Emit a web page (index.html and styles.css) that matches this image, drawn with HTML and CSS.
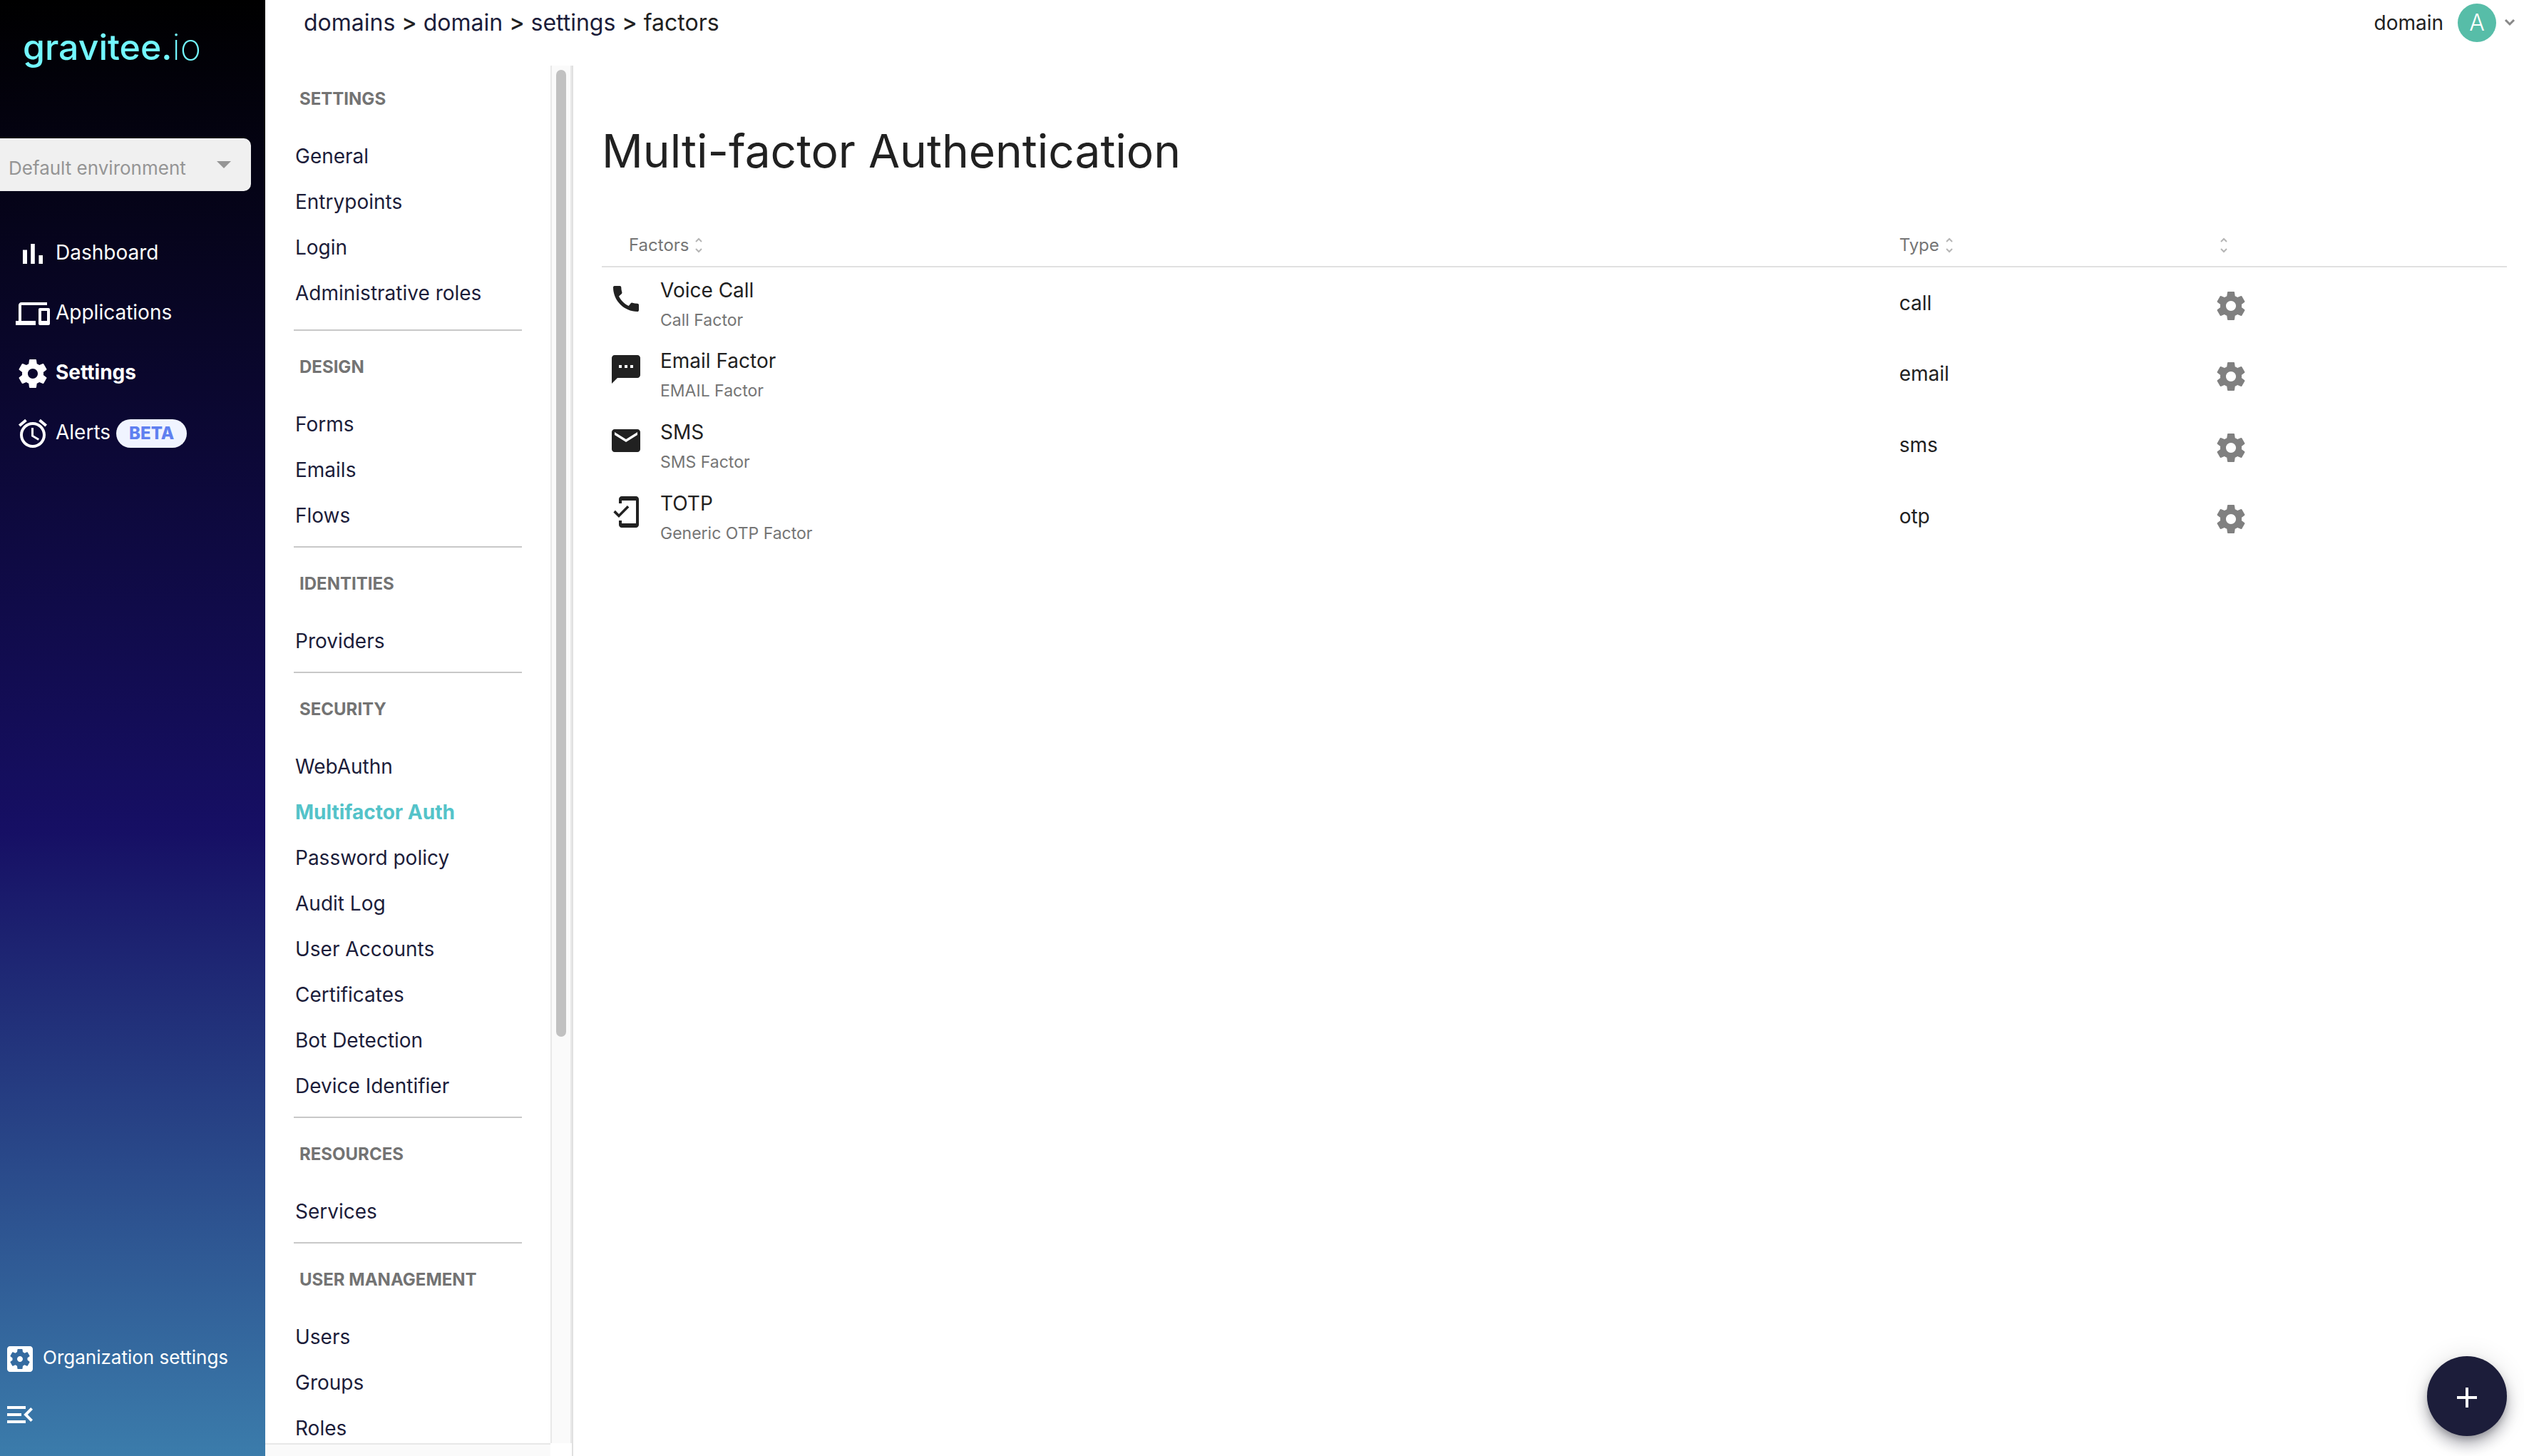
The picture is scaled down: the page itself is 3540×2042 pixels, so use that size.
FILE: index.html
```html
<!DOCTYPE html>
<html lang="en">
<head>
<meta charset="utf-8">
<title>Multi-factor Authentication</title>
<link rel="stylesheet" href="styles.css">
</head>
<body>
<svg class="defs" aria-hidden="true">
  <symbol id="gear" viewBox="0 0 24 24"><path d="M19.43 12.98c.04-.32.07-.64.07-.98s-.03-.66-.07-.98l2.11-1.65c.19-.15.24-.42.12-.64l-2-3.46c-.12-.22-.39-.3-.61-.22l-2.49 1c-.52-.4-1.08-.73-1.69-.98l-.38-2.65C14.46 2.18 14.25 2 14 2h-4c-.25 0-.46.18-.49.42l-.38 2.65c-.61.25-1.17.59-1.69.98l-2.49-1c-.23-.09-.49 0-.61.22l-2 3.46c-.13.22-.07.49.12.64l2.11 1.65c-.04.32-.07.65-.07.98s.03.66.07.98l-2.11 1.65c-.19.15-.24.42-.12.64l2 3.46c.12.22.39.3.61.22l2.49-1c.52.4 1.08.73 1.69.98l.38 2.65c.03.24.24.42.49.42h4c.25 0 .46-.18.49-.42l.38-2.65c.61-.25 1.17-.59 1.69-.98l2.49 1c.23.09.49 0 .61-.22l2-3.46c.12-.22.07-.49-.12-.64l-2.11-1.65zM12 15.5c-1.93 0-3.5-1.57-3.5-3.5s1.57-3.5 3.5-3.5 3.5 1.57 3.5 3.5-1.57 3.5-3.5 3.5z"/></symbol>
  <symbol id="sort" viewBox="0 0 12 24"><path d="M2 7l4-4 4 4M2 17l4 4 4-4" fill="none" stroke="currentColor" stroke-width="2"/></symbol>
</svg>
<div class="app">
  <aside class="sidebar">
    <a class="logo" href="#">gravitee.<span class="logo-suffix">io</span></a>
    <div class="env">
      <select class="env-select" aria-label="Environment" disabled><option>Default environment</option></select>
    </div>
    <nav class="main-nav" aria-label="Main">
      <a class="main-link" href="#"><svg class="icon" viewBox="0 0 24 24"><path d="M5 9.200h3V19H5zM10.600 5h2.800v14h-2.800zM16.200 13H19v6h-2.800z"/></svg><span class="label">Dashboard</span></a>
      <a class="main-link" href="#"><svg class="icon" viewBox="0 0 24 24"><path d="M4 6h18V4H4c-1.100 0-2 .9-2 2v11H0v3h14v-3H4V6zm19 2h-6c-.55 0-1 .45-1 1v10c0 .55.45 1 1 1h6c.55 0 1-.45 1-1V9c0-.55-.45-1-1-1zm-1 9h-4v-7h4v7z"/></svg><span class="label">Applications</span></a>
      <a class="main-link current" href="#"><svg class="icon"><use href="#gear"/></svg><span class="label">Settings</span></a>
      <a class="main-link" href="#"><svg class="icon" viewBox="0 0 24 24"><path d="M22 5.720l-4.600-3.860-1.290 1.530 4.600 3.860L22 5.720zM7.880 3.390L6.600 1.860 2 5.710l1.290 1.530 4.590-3.850zM12.500 8H11v6l4.750 2.850.75-1.230-4-2.370V8zM12 4c-4.970 0-9 4.030-9 9s4.020 9 9 9c4.970 0 9-4.030 9-9s-4.030-9-9-9zm0 16c-3.870 0-7-3.130-7-7s3.130-7 7-7 7 3.130 7 7-3.130 7-7 7z"/></svg><span class="label">Alerts</span><span class="badge">BETA</span></a>
    </nav>
    <div class="sidebar-foot">
      <a class="foot-link" href="#"><svg class="icon" viewBox="0 0 24 24"><path d="M12 10c-1.100 0-2 .9-2 2s.9 2 2 2 2-.9 2-2-.9-2-2-2zm7-7H5c-1.110 0-2 .9-2 2v14c0 1.100.89 2 2 2h14c1.110 0 2-.9 2-2V5c0-1.100-.89-2-2-2zm-1.750 9c0 .23-.02.46-.05.68l1.480 1.160c.13.11.17.3.08.45l-1.400 2.420c-.09.15-.27.21-.43.15l-1.740-.7c-.36.28-.76.51-1.180.69l-.26 1.850c-.03.17-.18.3-.35.3h-2.800c-.17 0-.32-.13-.35-.29l-.26-1.850c-.43-.18-.82-.41-1.180-.69l-1.740.7c-.16.06-.34 0-.43-.15l-1.400-2.420c-.09-.15-.05-.34.08-.45l1.480-1.160c-.03-.23-.05-.46-.05-.69 0-.23.02-.46.05-.68l-1.480-1.160c-.13-.11-.17-.3-.08-.45l1.400-2.420c.09-.15.27-.21.43-.15l1.740.7c.36-.28.76-.51 1.180-.69l.26-1.850c.03-.17.18-.3.35-.3h2.800c.17 0 .32.13.35.29l.26 1.850c.43.18.82.41 1.180.69l1.740-.7c.16-.06.34 0 .43.15l1.400 2.420c.09.15.05.34-.08.45l-1.480 1.160c.03.23.05.46.05.69z"/></svg><span class="label">Organization settings</span></a>
      <button class="collapse" type="button" aria-label="Collapse menu"><svg class="icon" viewBox="0 0 24 24"><path d="M3 18h13v-2H3v2zm0-5h10v-2H3v2zm0-7v2h13V6H3zm18 9.590L17.420 12 21 8.410 19.590 7l-5 5 5 5L21 15.590z"/></svg></button>
    </div>
  </aside>

  <div class="workspace">
    <header class="topbar">
      <nav class="crumbs" aria-label="Breadcrumb">
        <a href="#">domains</a> <b>&gt;</b> <a href="#">domain</a> <b>&gt;</b> <a href="#">settings</a> <b>&gt;</b> <span>factors</span>
      </nav>
      <button class="account" type="button">
        <span>domain</span>
        <span class="avatar">A</span>
        <svg class="chevron" viewBox="0 0 16 10"><path d="M2 1l6 6 6-6" fill="none" stroke="currentColor" stroke-width="3"/></svg>
      </button>
    </header>

    <div class="columns">
      <div class="submenu">
        <nav class="submenu-list" aria-label="Settings">
          <section class="group group-lead">
            <h2>Settings</h2>
            <a href="#">General</a><a href="#">Entrypoints</a><a href="#">Login</a><a href="#">Administrative roles</a>
          </section>
          <section class="group">
            <h2>Design</h2>
            <a href="#">Forms</a><a href="#">Emails</a><a href="#">Flows</a>
          </section>
          <section class="group">
            <h2>Identities</h2>
            <a href="#">Providers</a>
          </section>
          <section class="group">
            <h2>Security</h2>
            <a href="#">WebAuthn</a><a class="active" href="#">Multifactor Auth</a><a href="#">Password policy</a><a href="#">Audit Log</a><a href="#">User Accounts</a><a href="#">Certificates</a><a href="#">Bot Detection</a><a href="#">Device Identifier</a>
          </section>
          <section class="group">
            <h2>Resources</h2>
            <a href="#">Services</a>
          </section>
          <section class="group">
            <h2>User management</h2>
            <a href="#">Users</a><a href="#">Groups</a><a href="#">Roles</a>
          </section>
        </nav>
        <div class="track-y" aria-hidden="true"><div class="thumb"></div></div>
        <div class="track-x" aria-hidden="true"></div>
      </div>

      <main class="content">
        <h1>Multi-factor Authentication</h1>
        <table class="factors">
          <colgroup><col><col class="col-type"><col class="col-action"></colgroup>
          <thead>
            <tr>
              <th class="first" scope="col">Factors<svg class="sort"><use href="#sort"/></svg></th>
              <th scope="col">Type<svg class="sort"><use href="#sort"/></svg></th>
              <th scope="col" aria-label="Actions"><svg class="sort"><use href="#sort"/></svg></th>
            </tr>
          </thead>
          <tbody>
            <tr>
              <td><div class="factor"><svg class="icon" viewBox="0 0 24 24"><path d="M20.010 15.380c-1.230 0-2.420-.2-3.530-.56-.35-.12-.74-.03-1.010.24l-1.570 1.970c-2.830-1.350-5.480-3.900-6.890-6.830l1.950-1.660c.27-.28.35-.67.24-1.020-.37-1.110-.56-2.300-.56-3.530 0-.54-.45-.99-.99-.99H4.190C3.650 3 3 3.240 3 3.990 3 13.280 10.730 21 20.010 21c.71 0 .99-.63.99-1.180v-3.450c0-.54-.45-.99-.99-.99z"/></svg><div><div class="name">Voice Call</div><div class="kind">Call Factor</div></div></div></td>
              <td>call</td>
              <td><button class="gear-button" type="button" aria-label="Configure Voice Call"><svg class="icon"><use href="#gear"/></svg></button></td>
            </tr>
            <tr>
              <td><div class="factor"><svg class="icon" viewBox="0 0 24 24"><path d="M20 2H4c-1.100 0-1.990.9-1.990 2L2 22l4-4h14c1.100 0 2-.9 2-2V4c0-1.100-.9-2-2-2zM9 11H7V9h2v2zm4 0h-2V9h2v2zm4 0h-2V9h2v2z"/></svg><div><div class="name">Email Factor</div><div class="kind">EMAIL Factor</div></div></div></td>
              <td>email</td>
              <td><button class="gear-button" type="button" aria-label="Configure Email Factor"><svg class="icon"><use href="#gear"/></svg></button></td>
            </tr>
            <tr>
              <td><div class="factor"><svg class="icon" viewBox="0 0 24 24"><path d="M20 4H4c-1.100 0-1.990.9-1.990 2L2 18c0 1.100.9 2 2 2h16c1.100 0 2-.9 2-2V6c0-1.100-.9-2-2-2zm0 4l-8 5-8-5V6l8 5 8-5v2z"/></svg><div><div class="name">SMS</div><div class="kind">SMS Factor</div></div></div></td>
              <td>sms</td>
              <td><button class="gear-button" type="button" aria-label="Configure SMS"><svg class="icon"><use href="#gear"/></svg></button></td>
            </tr>
            <tr>
              <td><div class="factor"><svg class="icon" viewBox="0 0 24 24"><path d="M19 1H9c-1.100 0-2 .9-2 2v3h2V4h10v16H9v-2H7v3c0 1.100.9 2 2 2h10c1.100 0 2-.9 2-2V3c0-1.100-.9-2-2-2zM7.010 13.470l-2.550-2.550-1.270 1.270L7 16l7.190-7.190-1.270-1.270z"/></svg><div><div class="name">TOTP</div><div class="kind">Generic OTP Factor</div></div></div></td>
              <td>otp</td>
              <td><button class="gear-button" type="button" aria-label="Configure TOTP"><svg class="icon"><use href="#gear"/></svg></button></td>
            </tr>
          </tbody>
        </table>
      </main>
    </div>
  </div>
</div>
<button class="fab" type="button" aria-label="Add factor"><svg class="icon" viewBox="0 0 24 24"><path d="M19 13h-6v6h-2v-6H5v-2h6V5h2v6h6v2z"/></svg></button>
</body>
</html>
```
FILE: styles.css
```css
* { box-sizing: border-box; }
body {
  margin: 0;
  font-family: Inter, "Open Sans", sans-serif;
  font-size: 28px;
  line-height: 40px;
  color: #212121;
  background: #fff;
}
a { color: inherit; text-decoration: none; }
button { font: inherit; color: inherit; background: none; border: 0; padding: 0; }
.defs { display: none; }
.icon { display: block; width: 48px; height: 48px; fill: currentColor; flex: none; }

.app { display: flex; height: 100vh; overflow: hidden; }

.sidebar {
  flex: none;
  width: 372px;
  display: flex;
  flex-direction: column;
  color: #fff;
  background: linear-gradient(180deg, #000 0%, #160f64 57%, #3b7cab 100%);
}
.logo {
  padding: 34px 32px 0;
  font-size: 50px;
  line-height: 64px;
  font-weight: 500;
  color: #73f7ff;
}
.logo-suffix { font-weight: 200; }
.env { position: relative; margin: 96px 20px 0 0; }
.env::after {
  content: "";
  position: absolute;
  right: 28px;
  top: 32px;
  border: 10px solid transparent;
  border-top-color: #959595;
  border-bottom: 0;
}
.env-select {
  display: block;
  width: 100%;
  height: 74px;
  padding: 10px 12px 0;
  border: 0;
  border-radius: 0 10px 10px 0;
  background: #f0f0f0;
  color: #959595;
  opacity: 1;
  font: inherit;
  font-size: 26px;
  appearance: none;
}
.main-nav { padding: 46px 22px 0; }
.main-link { display: flex; align-items: center; gap: 8px; height: 84px; }
.main-link.current { font-weight: 700; }
.label { padding-bottom: 4px; }
.badge {
  height: 40px;
  padding: 0 18px;
  border-radius: 20px;
  background: #f0f4ff;
  color: #5f80f0;
  font-size: 24px;
  font-weight: 800;
}
.sidebar-foot { margin-top: auto; padding: 0 4px 34px; }
.foot-link { display: flex; align-items: center; gap: 8px; font-size: 26px; margin-bottom: 30px; }
.collapse { display: block; }

.workspace { flex: 1; min-width: 0; display: flex; flex-direction: column; }
.topbar { display: flex; justify-content: space-between; align-items: center; height: 64px; padding: 0 12px 0 54px; }
.crumbs { font-size: 32px; }
.crumbs a { color: #1c1d3a; }
.crumbs b { font-weight: 500; }
.account { display: flex; align-items: center; }
.avatar {
  width: 54px;
  height: 54px;
  margin: 0 11px 0 20px;
  border-radius: 50%;
  background: #57bda8;
  color: #fff;
  font-size: 32px;
  font-weight: 300;
  line-height: 54px;
}
.chevron { width: 16px; height: 10px; color: #888; }

.columns { flex: 1; min-height: 0; display: flex; padding-top: 28px; }
.submenu {
  flex: none;
  width: 432px;
  display: grid;
  grid-template-columns: 1fr 30px;
  grid-template-rows: 1fr 18px;
  border-right: 2px solid #e0e0e0;
}
.submenu-list { min-height: 0; overflow: hidden; padding: 31px 40px 0; color: #1c1d3a; }
.track-y { background: #fafafa; border: solid #e8e8e8; border-width: 0 2px; padding: 6px; }
.thumb { height: 70.6%; border-radius: 8px; background: #c1c1c1; }
.track-x { grid-column: 1 / -1; background: #fafafa; border-top: 2px solid #e8e8e8; margin-right: 30px; }
.group { padding-bottom: 11px; }
.group-lead { padding-bottom: 19px; }
.group + .group { border-top: 2px solid #c8c8c8; padding-top: 35px; }
.group h2 {
  margin: 0 0 32px 8px;
  font-size: 24px;
  line-height: 32px;
  font-weight: 700;
  text-transform: uppercase;
  color: #737373;
}
.group a { display: block; padding-left: 2px; line-height: 64px; }
.group a.active { color: #54c3c9; font-weight: 700; }

.content { flex: 1; min-width: 0; padding: 80px 24px 0 40px; }
h1 { margin: 0 0 66px; font-size: 64px; line-height: 80px; font-weight: 400; }
.factors { width: 100%; border-collapse: collapse; table-layout: fixed; }
.col-type { width: 16.5%; }
.col-action { width: 15.4%; }
th {
  height: 56px;
  padding: 0 0 4px;
  border-bottom: 2px solid #e0e0e0;
  text-align: left;
  font-size: 24px;
  font-weight: 400;
  color: #757575;
}
th.first { padding-left: 38px; }
.sort { width: 12px; height: 24px; margin-left: 8px; vertical-align: -4px; color: #b5b5b5; }
td { height: 100px; padding: 0; }
.factor { display: flex; align-items: center; gap: 24px; padding: 8px 0 0 10px; }
.factor .icon { margin-bottom: 20px; }
.kind { font-size: 23px; line-height: 44px; color: #757575; }
.gear-button { display: block; margin-top: 8px; color: #808080; }

.fab {
  position: fixed;
  right: 24px;
  bottom: 28px;
  width: 112px;
  height: 112px;
  padding-top: 4px;
  display: grid;
  place-items: center;
  border-radius: 50%;
  background: #1c1d3a;
  color: #fff;
  box-shadow: 0 6px 10px -2px #0003, 0 12px 20px #0024, 0 2px 36px #0000001f;
}
```
